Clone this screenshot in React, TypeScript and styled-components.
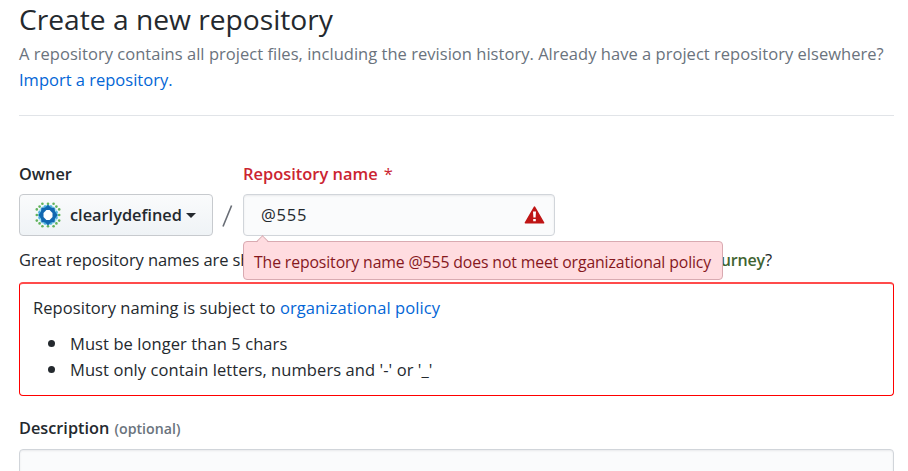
import React from 'react';
import styled, { createGlobalStyle } from 'styled-components';

const GlobalStyle = createGlobalStyle`
  *, *::before, *::after { box-sizing: border-box; }
  html, body { margin: 0; background: #fff; overflow: hidden; }
  body {
    font-family: "Open Sans", "Noto Sans", sans-serif;
    font-size: 16.5px;
    line-height: 26px;
    color: #24292e;
    white-space: nowrap;
  }
`;

const Page = styled.main`
  width: 908px;
  height: 471px;
  overflow: hidden;
  padding: 0 14px 0 19px;
  display: flex;
  flex-direction: column;

  > * { flex-shrink: 0; }
`;

const Header = styled.header`
  height: 116px;
  border-bottom: 1px solid #e1e4e8;
`;

const Title = styled.h1`
  margin: 0 0 3px;
  font-size: 28.2px;
  line-height: 38px;
  font-weight: 400;
`;

const Subtitle = styled.p`
  margin: 0;
  color: #6a737d;
  letter-spacing: 0.03px;
`;

const Link = styled.a<{ $spacing?: number }>`
  color: #0366d6;
  text-decoration: none;
  letter-spacing: ${p => p.$spacing ?? 0}px;
`;

const FieldRow = styled.div`
  display: flex;
  align-items: flex-end;
  margin-top: 45px;
`;

const Field = styled.div`
  display: flex;
  flex-direction: column;
  gap: 7px;
  position: relative;
`;

const Label = styled.label<{ $invalid?: boolean }>`
  font-size: ${p => (p.$invalid ? 16.45 : 16.3)}px;
  font-weight: 600;
  color: ${p => (p.$invalid ? '#cb2431' : '#24292e')};
`;

const Asterisk = styled.span`
  margin-left: 6px;
  font-weight: 400;
`;

const OwnerButton = styled.button`
  display: flex;
  align-items: center;
  width: 194px;
  height: 42px;
  padding: 0 0 0 15px;
  border: 1px solid #c7cace;
  border-radius: 4px;
  background: linear-gradient(#fafbfc, #eff3f6);
  color: #24292e;
  font: 600 16.35px/26px "Open Sans", sans-serif;
`;

const OwnerName = styled.span`
  margin-left: 9px;
`;

const Caret = styled.span`
  margin: 1px 0 0 4px;
  border: 5px solid transparent;
  border-top-color: #24292e;
  border-bottom: 0;
`;

const Slash = styled.svg`
  margin: 0 9px 8px 8px;
`;

const NameControl = styled.div`
  display: flex;
  align-items: center;
  justify-content: space-between;
  width: 312px;
  height: 42px;
  padding: 0 9px 0 17px;
  border: 1px solid #d1d5da;
  border-radius: 4px;
  background: #fafbfc;
  box-shadow: inset 0 1px 2px rgba(27, 31, 35, 0.075);
  letter-spacing: 0.8px;
`;

const Tooltip = styled.div`
  position: absolute;
  z-index: 1;
  top: 80px;
  left: 0;
  width: 480px;
  height: 39px;
  padding: 7px 0 0 10px;
  border: 1px solid #d9aab1;
  border-radius: 4px;
  background: #ffdce0;
  color: #86181d;
  font-size: 15.8px;
  letter-spacing: -0.125px;

  &::before {
    content: '';
    position: absolute;
    left: 14px;
    top: -5px;
    width: 9px;
    height: 9px;
    border: solid #d9aab1;
    border-width: 1px 0 0 1px;
    background: linear-gradient(135deg, #ffdce0 50%, transparent 50%);
    transform: rotate(45deg);
  }
`;

const Entered = styled.span`
  font-weight: 500;
`;

const Hint = styled.p`
  display: flex;
  justify-content: space-between;
  width: 753px;
  margin: 11px 0 9px;
`;

const HintText = styled.span`
  letter-spacing: -0.09px;
`;

const Suggestion = styled.strong`
  font-weight: 600;
  font-size: 16px;
  letter-spacing: -0.2px;
  color: #3f6432;
`;

const PolicyBox = styled.section`
  height: 114px;
  padding: 11px 0 0 13px;
  border: 1px solid #ff0000;
  border-top: 2px solid #ff4b4b;
  border-radius: 4px;
`;

const PolicyText = styled.p`
  margin: 0 0 10px;
  letter-spacing: 0.07px;
`;

const Rules = styled.ul`
  margin: 0;
  padding: 0;
  list-style: none;
`;

const Rule = styled.li`
  display: flex;
  align-items: center;
  padding-left: 15px;
  letter-spacing: 0.08px;

  &::before {
    content: '';
    width: 7px;
    height: 7px;
    margin: 0 15px 1px 0;
    border-radius: 50%;
    background: #24292e;
  }
`;

const DescriptionField = styled.div`
  display: flex;
  flex-direction: column;
  gap: 7px;
  margin-top: 19px;
`;

const Optional = styled.span`
  margin-left: 1px;
  font-size: 14.2px;
  color: #6a737d;
`;

const DescriptionInput = styled.div`
  height: 43px;
  border: 1px solid #d1d5da;
  border-radius: 4px;
  background: #fafbfc;
  box-shadow: inset 0 1px 2px rgba(27, 31, 35, 0.075);
`;

const rimDots: [number, number][] = [];
for (let row = 0; row < 9; row++) {
  for (let col = 0; col < 9; col++) {
    const distance = Math.hypot(row - 4, col - 4);
    if (distance > 2.9 && distance < 5.1 && (row + col) % 2 === 0) {
      rimDots.push([1.8 + col * 2.8, 1.8 + row * 2.8]);
    }
  }
}

function Avatar() {
  return (
    <svg width="26" height="26" viewBox="0 0 26 26">
      <circle cx="13" cy="13" r="10.2" fill="#a5dff4" />
      {rimDots.map(([x, y]) => {
        const far = Math.hypot(x - 13, y - 13) > 9.8;
        return <circle key={`${x}-${y}`} cx={x} cy={y} r="1.3" fill={far ? '#62b35c' : '#4bb5de'} />;
      })}
      <path d="M13 2.6l2.8 2.8 3.8.3.4 3.8L22.8 13 20 16.5l-.4 3.8-3.8.3L13 23.4l-2.8-2.8-3.8-.3-.4-3.8L3.2 13 6 9.5l.4-3.8 3.8-.3z" fill="#1268b1" />
      <path d="M11.4 8h3.2l2.9 3v4l-2.9 3h-3.2l-2.9-3v-4z" fill="#fff" />
    </svg>
  );
}

function Warning() {
  return (
    <svg width="21" height="18" viewBox="0 0 21 18">
      <path d="M10.5 1.2 19.6 16.8H1.4z" fill="#bf1515" stroke="#bf1515" strokeWidth="1.6" strokeLinejoin="round" />
      <path d="M9 5.4h3l-.4 6H9.4zM9.2 12.9h2.6v2.4H9.2z" fill="#fff" />
    </svg>
  );
}

export default function App() {
  return (
    <>
      <GlobalStyle />
      <Page>
        <Header>
          <Title>Create a new repository</Title>
          <Subtitle>
            A repository contains all project files, including the revision history. Already have a project repository elsewhere?
            <br />
            <Link>Import a repository.</Link>
          </Subtitle>
        </Header>
        <FieldRow>
          <Field>
            <Label>Owner</Label>
            <OwnerButton>
              <Avatar />
              <OwnerName>clearlydefined</OwnerName>
              <Caret />
            </OwnerButton>
          </Field>
          <Slash width="13" height="24" viewBox="0 0 13 24">
            <path d="M2 22.5 10.6 1.5" stroke="#686d75" strokeWidth="1.6" />
          </Slash>
          <Field>
            <Label $invalid>
              Repository name<Asterisk>*</Asterisk>
            </Label>
            <NameControl>
              @555
              <Warning />
            </NameControl>
            <Tooltip>
              The repository name <Entered>@555</Entered> does not meet organizational policy
            </Tooltip>
          </Field>
        </FieldRow>
        <Hint>
          <HintText>Great repository names are sh</HintText>
          <span>
            <Suggestion>urney</Suggestion>?
          </span>
        </Hint>
        <PolicyBox>
          <PolicyText>
            Repository naming is subject to <Link $spacing={0.1}>organizational policy</Link>
          </PolicyText>
          <Rules>
            <Rule>Must be longer than 5 chars</Rule>
            <Rule>Must only contain letters, numbers and '-' or '_'</Rule>
          </Rules>
        </PolicyBox>
        <DescriptionField>
          <Label>
            Description <Optional>(optional)</Optional>
          </Label>
          <DescriptionInput />
        </DescriptionField>
      </Page>
    </>
  );
}
